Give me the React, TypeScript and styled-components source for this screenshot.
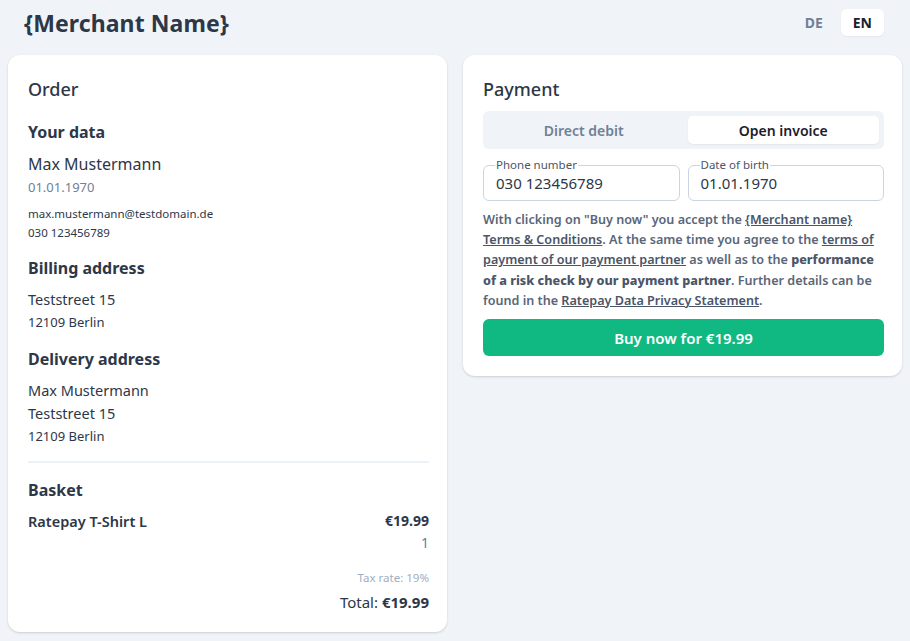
import React from "react";
import styled, { createGlobalStyle } from "styled-components";

const Global = createGlobalStyle`
  html, body { margin: 0; padding: 0; background: #f0f4f8; }
  body { font-family: "Noto Sans", "Open Sans", sans-serif; color: #2d3748; }
  * { box-sizing: border-box; }
`;

const Page = styled.div`
  min-height: 641px;
  background: #f0f4f8;
  padding: 0 8px 8px;
`;

const Header = styled.header`
  height: 55px;
  display: flex;
  align-items: center;
  justify-content: space-between;
  padding: 0 18px 10px 16px;
`;

const Title = styled.h1`
  margin: 0;
  font-size: 23px;
  font-weight: 700;
  color: #2d3748;
  letter-spacing: 0.1px;
`;

const LangSwitch = styled.div`
  display: flex;
  gap: 6px;
  align-items: center;
`;

const LangButton = styled.button<{ $active?: boolean }>`
  border: none;
  font-family: inherit;
  font-size: 14px;
  font-weight: 700;
  padding: 4px 12px;
  height: 27px;
  border-radius: 6px;
  background: ${(p) => (p.$active ? "#ffffff" : "transparent")};
  color: ${(p) => (p.$active ? "#1a202c" : "#718096")};
  box-shadow: ${(p) => (p.$active ? "0 1px 2px rgba(0,0,0,0.05)" : "none")};
`;

const Columns = styled.div`
  display: grid;
  grid-template-columns: 1fr 1fr;
  gap: 16px;
  align-items: start;
`;

const Card = styled.section<{ $bottom?: number }>`
  background: #ffffff;
  border-radius: 12px;
  box-shadow: 0 1px 3px rgba(0, 0, 0, 0.1), 0 1px 2px rgba(0, 0, 0, 0.06);
  padding: 20px 18px ${(p) => p.$bottom ?? 20}px 20px;
`;

const CardTitle = styled.h2<{ $gap?: number }>`
  margin: 0 0 ${(p) => p.$gap ?? 10}px;
  font-size: 18px;
  line-height: 28px;
  font-weight: 500;
  color: #2d3748;
`;

const SectionTitle = styled.h3`
  margin: 0 0 8px;
  font-size: 16px;
  line-height: 24px;
  font-weight: 700;
  color: #2d3748;
`;

const Section = styled.div`
  margin-bottom: 14px;
`;

const Line = styled.div<{ $size?: number; $color?: string; $lh?: number; $top?: number }>`
  font-size: ${(p) => p.$size ?? 14}px;
  line-height: ${(p) => p.$lh ?? 22}px;
  color: ${(p) => p.$color ?? "#2d3748"};
  margin-top: ${(p) => p.$top ?? 0}px;
`;

const Divider = styled.hr`
  border: none;
  border-top: 2px solid #edf2f7;
  margin: 2px 0 15px;
`;

const ItemRow = styled.div`
  display: flex;
  justify-content: space-between;
  align-items: flex-start;
  margin-top: 1px;
`;

const ItemName = styled.div`
  font-size: 14.5px;
  line-height: 22px;
  font-weight: 600;
  color: #2d3748;
`;

const ItemPrice = styled.div`
  text-align: right;
`;

const Price = styled.div`
  font-size: 14px;
  line-height: 22px;
  font-weight: 700;
  color: #2d3748;
`;

const Qty = styled.div`
  font-size: 14px;
  line-height: 22px;
  color: #5b7fa6;
`;

const Totals = styled.div`
  margin-top: 13px;
  text-align: right;
`;

const Tax = styled.div`
  font-size: 11.5px;
  line-height: 22px;
  color: #a0aec0;
`;

const Total = styled.div`
  font-size: 15px;
  line-height: 26px;
  color: #2d3748;
  b { font-weight: 700; }
`;

const Tabs = styled.div`
  display: grid;
  grid-template-columns: 1fr 1fr;
  gap: 8px;
  background: #f0f4f8;
  border-radius: 6px;
  padding: 5px;
  margin-top: -2px;
`;

const Tab = styled.button<{ $active?: boolean }>`
  border: none;
  font-family: inherit;
  font-size: 14px;
  font-weight: 600;
  height: 28px;
  border-radius: 5px;
  background: ${(p) => (p.$active ? "#ffffff" : "transparent")};
  color: ${(p) => (p.$active ? "#1a202c" : "#718096")};
  box-shadow: ${(p) => (p.$active ? "0 1px 2px rgba(0,0,0,0.06)" : "none")};
`;

const Fields = styled.div`
  display: grid;
  grid-template-columns: 1fr 1fr;
  gap: 8px;
  margin-top: 15px;
`;

const Field = styled.fieldset`
  margin: 0;
  padding: 0 12px 5px;
  border: 1px solid #cbd5e0;
  border-radius: 6px;
  height: 42px;
  margin-top: -5px;
  min-width: 0;
`;

const Legend = styled.legend`
  font-size: 11.5px;
  line-height: 12px;
  padding: 0 1px;
  margin-left: -1px;
  color: #4a5568;
`;

const FieldValue = styled.div`
  font-size: 15px;
  line-height: 22px;
  color: #2d3748;
  margin-top: 1px;
`;

const Legal = styled.p`
  margin: 9px 0 8px;
  font-size: 12.6px;
  line-height: 20.2px;
  font-weight: 600;
  color: #5a6678;
  a {
    color: #4a5568;
    text-decoration: underline;
  }
  b { font-weight: 800; color: #4a5568; }
`;

const BuyButton = styled.button`
  width: 100%;
  height: 37px;
  border: none;
  border-radius: 6px;
  background: #10b981;
  color: #ffffff;
  font-family: inherit;
  font-size: 15px;
  font-weight: 600;
`;

export default function App() {
  return (
    <Page>
      <Global />
      <Header>
        <Title>{"{Merchant Name}"}</Title>
        <LangSwitch>
          <LangButton>DE</LangButton>
          <LangButton $active>EN</LangButton>
        </LangSwitch>
      </Header>
      <Columns>
        <Card $bottom={17}>
          <CardTitle $gap={17}>Order</CardTitle>
          <Section>
            <SectionTitle>Your data</SectionTitle>
            <Line $size={16} $lh={24}>Max Mustermann</Line>
            <Line $size={13} $color="#718096" $lh={22}>01.01.1970</Line>
            <Line $size={11.5} $lh={19} $top={6}>max.mustermann@testdomain.de</Line>
            <Line $size={11.5} $lh={19}>030 123456789</Line>
          </Section>
          <Section>
            <SectionTitle>Billing address</SectionTitle>
            <Line $size={14.5} $lh={23}>Teststreet 15</Line>
            <Line $size={13} $lh={22}>12109 Berlin</Line>
          </Section>
          <Section>
            <SectionTitle>Delivery address</SectionTitle>
            <Line $size={14.5} $lh={23}>Max Mustermann</Line>
            <Line $size={14.5} $lh={23}>Teststreet 15</Line>
            <Line $size={13} $lh={22}>12109 Berlin</Line>
          </Section>
          <Divider />
          <SectionTitle>Basket</SectionTitle>
          <ItemRow>
            <ItemName>Ratepay T-Shirt L</ItemName>
            <ItemPrice>
              <Price>€19.99</Price>
              <Qty>1</Qty>
            </ItemPrice>
          </ItemRow>
          <Totals>
            <Tax>Tax rate: 19%</Tax>
            <Total>
              Total: <b>€19.99</b>
            </Total>
          </Totals>
        </Card>
        <Card>
          <CardTitle>Payment</CardTitle>
          <Tabs>
            <Tab>Direct debit</Tab>
            <Tab $active>Open invoice</Tab>
          </Tabs>
          <Fields>
            <Field>
              <Legend>Phone number</Legend>
              <FieldValue>030 123456789</FieldValue>
            </Field>
            <Field>
              <Legend>Date of birth</Legend>
              <FieldValue>01.01.1970</FieldValue>
            </Field>
          </Fields>
          <Legal>
            With clicking on "Buy now" you accept the <a>{"{Merchant name}"}</a> <a>Terms &amp; Conditions</a>. At the
            same time you agree to the <a>terms of</a> <a>payment of our payment partner</a> as well as to the{" "}
            <b>performance</b> <b>of a risk check by our payment partner</b>. Further details can be found in the{" "}
            <a>Ratepay Data Privacy Statement</a>.
          </Legal>
          <BuyButton>Buy now for €19.99</BuyButton>
        </Card>
      </Columns>
    </Page>
  );
}
